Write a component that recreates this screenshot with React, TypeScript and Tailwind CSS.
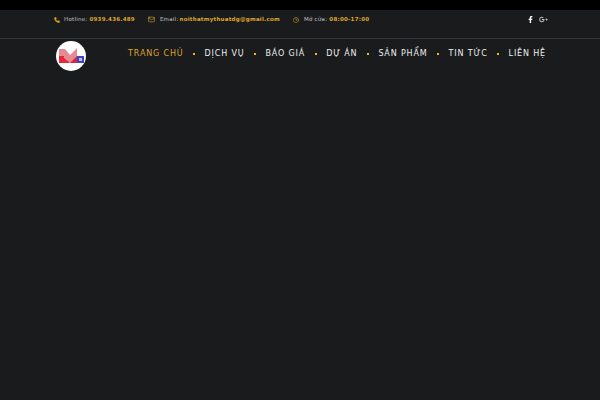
import { Clock, Mail, Phone } from 'lucide-react';
import { FaFacebookF, FaGooglePlusG } from 'react-icons/fa';

const menu = ['DỊCH VỤ', 'BÁO GIÁ', 'DỰ ÁN', 'SẢN PHẨM', 'TIN TỨC', 'LIÊN HỆ'];

function Logo() {
  return (
    <div className="w-[30px] h-[30px] rounded-full bg-white overflow-hidden shrink-0">
      <svg width="30" height="30" viewBox="0 0 30 30">
        <path d="M3 8 L9 8 L14 14 L21 7 L21 22 L3 22 Z" fill="#e58a92" />
        <path d="M3 15 L8 15 L8 22 L3 22 Z" fill="#e8283a" />
        <path d="M8 17 L13 21 L13 22 L8 22 Z" fill="#e8283a" />
        <path d="M14 22 L21 15 L21 22 Z" fill="#d8283a" />
        <rect x="21" y="15" width="7" height="7" fill="#3a45c8" />
        <rect x="23" y="17" width="3" height="3" fill="#b9c0f0" />
      </svg>
    </div>
  );
}

export default function App() {
  return (
    <div className="w-[600px] h-[400px] overflow-hidden bg-[#1a1b1d] font-['DejaVu_Sans',sans-serif]">
      <div className="h-[10px] bg-black" />

      {/* top bar */}
      <div className="h-[29px] border-b border-[#333436] px-[54px] pb-[9px] flex items-center whitespace-nowrap text-[5.5px] tracking-[0.25px] text-[#c4c4c4]">
        <Phone size={6} className="text-[#dfa52d] fill-[#dfa52d] mr-[4px]" />
        <span className="mr-[2px]">Hotline:</span>
        <b className="text-[#dfa52d] mr-[13px]">0939.436.489</b>
        <Mail size={7} className="text-[#dfa52d] mr-[5px]" />
        <span className="mr-[1px]">Email:</span>
        <b className="text-[#dfa52d] mr-[13px]">noithatmythuatdg@gmail.com</b>
        <Clock size={6} className="text-[#dfa52d] mr-[5px]" />
        <span className="mr-[2px]">Mở cửa:</span>
        <b className="text-[#dfa52d]">08:00-17:00</b>
        <div className="ml-auto mr-[-2px] flex items-center gap-[5px]">
          <FaFacebookF size={7} className="text-white" />
          <FaGooglePlusG size={9} className="text-[#bbbbbb]" />
        </div>
      </div>

      {/* header */}
      <div className="pl-[56px] pr-[54px] pt-[2px] flex items-start">
        <Logo />
        <nav className="ml-auto pt-[6px] flex items-center whitespace-nowrap text-[8px] leading-[14px] tracking-[0.85px] text-[#eeeeee]">
          <span className="text-[#dfa52d]">TRANG CHỦ</span>
          {menu.map(item => (
            <span key={item} className="flex items-center">
              <span className="w-[2px] h-[2px] bg-[#f2b632] mx-[9.5px] mb-[1px]" />
              {item}
            </span>
          ))}
        </nav>
      </div>
    </div>
  );
}
